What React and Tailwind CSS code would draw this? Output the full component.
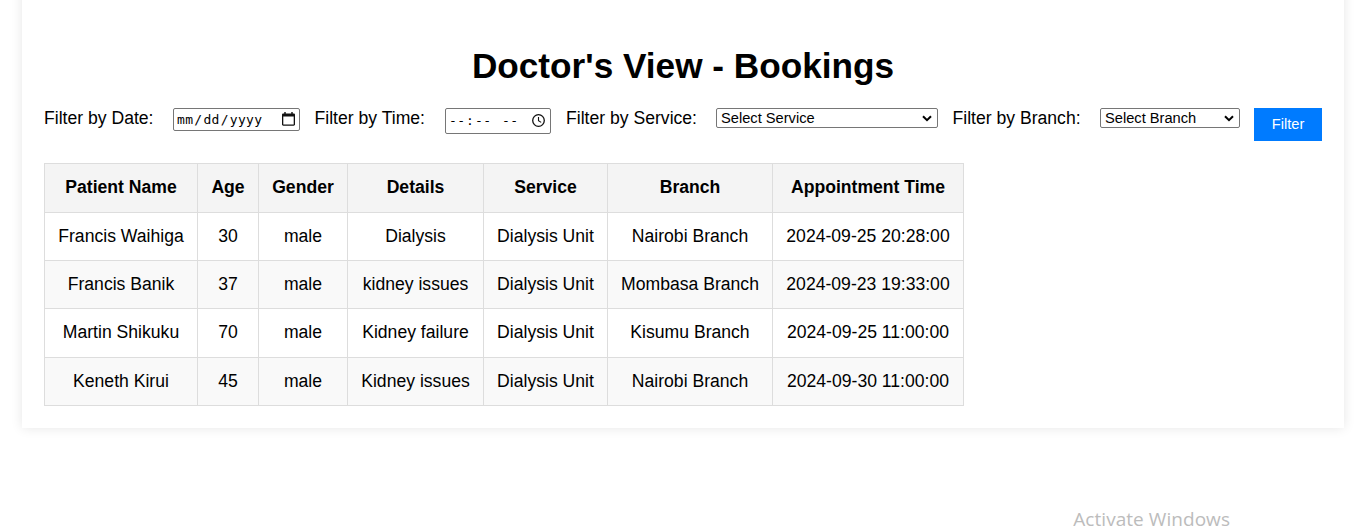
const columns = [
  { label: "Patient Name", width: "w-[153px]" },
  { label: "Age", width: "w-[61px]" },
  { label: "Gender", width: "w-[89px]" },
  { label: "Details", width: "w-[136px]" },
  { label: "Service", width: "w-[124px]" },
  { label: "Branch", width: "w-[165px]" },
  { label: "Appointment Time", width: "w-[191px]" },
];

const rows = [
  { height: "h-12", pad: "pb-0", cells: ["Francis Waihiga", "30", "male", "Dialysis", "Dialysis Unit", "Nairobi Branch", "2024-09-25 20:28:00"] },
  { height: "h-12", pad: "pb-0", cells: ["Francis Banik", "37", "male", "kidney issues", "Dialysis Unit", "Mombasa Branch", "2024-09-23 19:33:00"] },
  { height: "h-[49px]", pad: "pb-0.5", cells: ["Martin Shikuku", "70", "male", "Kidney failure", "Dialysis Unit", "Kisumu Branch", "2024-09-25 11:00:00"] },
  { height: "h-12", pad: "pb-0", cells: ["Keneth Kirui", "45", "male", "Kidney issues", "Dialysis Unit", "Nairobi Branch", "2024-09-30 11:00:00"] },
];

function Label({ width, children }) {
  return <label className={`${width} shrink-0 whitespace-nowrap leading-5`}>{children}</label>;
}

function Chevron() {
  return (
    <svg className="h-[7px] w-[10px] shrink-0" viewBox="0 0 10 7" fill="none" stroke="#000" strokeWidth="2">
      <path d="M1 1.2 L5 5.2 L9 1.2" />
    </svg>
  );
}

function Select({ width, children }) {
  return (
    <button
      type="button"
      className={`${width} flex h-5 shrink-0 items-center justify-between rounded-[2px] border border-[#767676] bg-white pr-[5px] pl-1 text-[14.67px] leading-[18px]`}
    >
      <span>{children}</span>
      <Chevron />
    </button>
  );
}

function DateField() {
  return (
    <div className="mr-[14.5px] flex h-[23px] w-[127px] shrink-0 items-center justify-between rounded-[2px] border border-[#767676] pr-1 pl-[3px] font-['DejaVu_Sans_Mono',monospace] text-[13px] leading-none">
      <span className="flex gap-px tracking-[0.3px]">
        <span>mm</span>
        <span>/</span>
        <span>dd</span>
        <span>/</span>
        <span>yyyy</span>
      </span>
      <svg className="mb-px h-[14px] w-[13px]" viewBox="0 0 13 14">
        <path fill="#111" fillRule="evenodd" d="M2.300 0h1.400v1.400h5.600V0h1.400v1.400h1c.7 0 1.300.5 1.300 1.200V12.500c0 .7-.6 1.200-1.300 1.200H1.300c-.7 0-1.300-.5-1.300-1.200V2.600c0-.7.6-1.200 1.300-1.200h1zM1.300 4.600v7.800h10.400V4.600z" />
      </svg>
    </div>
  );
}

function TimeField() {
  return (
    <div className="mr-[15px] flex h-[26px] w-[106px] shrink-0 items-center justify-between rounded-[2px] border border-[#767676] pr-[5px] pl-[3px] font-['DejaVu_Sans_Mono',monospace] text-[13px] leading-none">
      <span className="mb-0.5 flex tracking-[0.5px]">
        <span className="w-[17px]">--</span>
        <span className="w-[9px]">:</span>
        <span className="w-[27px]">--</span>
        <span>--</span>
      </span>
      <svg className="mb-px h-[13px] w-[13px]" viewBox="0 0 13 13" fill="none" stroke="#111" strokeWidth="1.3">
        <circle cx="6.500" cy="6.500" r="5.800" />
        <path d="M6.500 3v3.700l2.700 1.700" strokeWidth="1.100" />
      </svg>
    </div>
  );
}

export default function App() {
  return (
    <div className="flex h-[530px] flex-col items-center overflow-hidden bg-white font-['Liberation_Sans',Arial,sans-serif] text-[17.6px] text-black">
      <main className="-mt-5 h-[448px] w-[1322px] shrink-0 bg-white px-[22px] pt-16 shadow-[0_0_11px_rgba(0,0,0,0.1)]">
        <h1 className="text-center text-[35.2px] leading-11 font-bold">Doctor's View - Bookings</h1>
        <form className="mt-5 flex items-start">
          <Label width="w-[129px]">Filter by Date:</Label>
          <DateField />
          <Label width="w-[130.5px]">Filter by Time:</Label>
          <TimeField />
          <Label width="w-[150px]">Filter by Service:</Label>
          <Select width="mr-[14.5px] w-[222px]">Select Service</Select>
          <Label width="w-[147.5px]">Filter by Branch:</Label>
          <Select width="mr-[14px] w-[140px]">Select Branch</Select>
          <button type="button" className="h-[33px] w-[68px] shrink-0 bg-[#007bff] pb-0.5 text-[14.67px] text-white">
            Filter
          </button>
        </form>
        <table className="mt-[22px] w-[920px] table-fixed border-separate border-spacing-0 border-t border-l border-[#ddd] text-center">
          <thead>
            <tr className="h-[49px] bg-[#f4f4f4]">
              {columns.map((column) => (
                <th key={column.label} className={`${column.width} border-r border-b border-[#ddd] px-0 pt-0 pb-0.5 font-bold whitespace-nowrap`}>
                  {column.label}
                </th>
              ))}
            </tr>
          </thead>
          <tbody>
            {rows.map((row) => (
              <tr key={row.cells[0]} className={`${row.height} even:bg-[#f9f9f9]`}>
                {row.cells.map((cell, index) => (
                  <td key={index} className={`${row.pad} border-r border-b border-[#ddd] px-0 pt-0 whitespace-nowrap`}>
                    {cell}
                  </td>
                ))}
              </tr>
            ))}
          </tbody>
        </table>
      </main>
      <p className="mt-20 mr-[136px] self-end font-['Open_Sans','Noto_Sans',sans-serif] text-[19px] leading-[22px] tracking-[0.05px] whitespace-nowrap text-[#bcbcbc]">
        Activate Windows
      </p>
    </div>
  );
}
